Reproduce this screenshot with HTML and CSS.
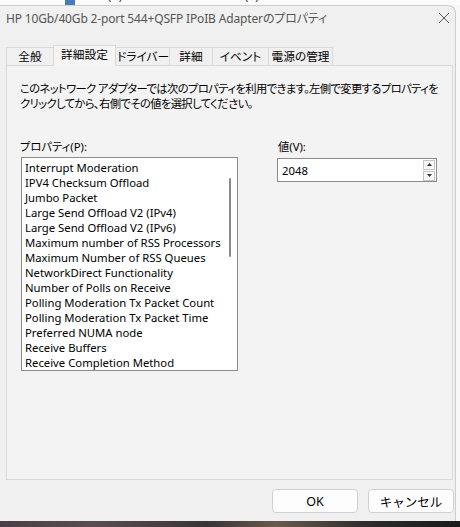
FILE: index.html
```html
<!DOCTYPE html>
<html lang="ja">
<head>
<meta charset="utf-8">
<title>プロパティ</title>
<link rel="stylesheet" href="styles.css">
</head>
<body>
<div class="desktop-top">
  <span class="app-icon"></span>
  <span class="app-text"><span class="app-text-inner">Intel(R) Ethernet Connection (4) I219-LM</span></span>
</div>
<div class="window">
  <div class="titlebar">
    <span class="title">HP 10Gb/40Gb 2-port 544+QSFP IPoIB Adapterのプロパティ</span>
    <svg class="close" width="12" height="12" viewBox="0 0 12 12"><path d="M1 1 L11 11 M11 1 L1 11" stroke="#5a5a5a" stroke-width="1" fill="none"/></svg>
  </div>
  <div class="tabs">
    <div class="tab t1">全般</div>
    <div class="tab t2 sel">詳細設定</div>
    <div class="tab t3">ドライバー</div>
    <div class="tab t4">詳細</div>
    <div class="tab t5">イベント</div>
    <div class="tab t6">電源の管理</div>
  </div>
  <div class="panel">
    <p class="desc">このネットワーク アダプターでは次のプロパティを利用できます。左側で変更するプロパティを<br>クリックしてから、右側でその値を選択してください。</p>
    <div class="fields">
      <div class="prop-col">
        <div class="label">プロパティ(P):</div>
        <div class="listbox">
          <div class="item">Interrupt Moderation</div>
          <div class="item">IPV4 Checksum Offload</div>
          <div class="item">Jumbo Packet</div>
          <div class="item">Large Send Offload V2 (IPv4)</div>
          <div class="item">Large Send Offload V2 (IPv6)</div>
          <div class="item">Maximum number of RSS Processors</div>
          <div class="item">Maximum Number of RSS Queues</div>
          <div class="item">NetworkDirect Functionality</div>
          <div class="item">Number of Polls on Receive</div>
          <div class="item">Polling Moderation Tx Packet Count</div>
          <div class="item">Polling Moderation Tx Packet Time</div>
          <div class="item">Preferred NUMA node</div>
          <div class="item">Receive Buffers</div>
          <div class="item">Receive Completion Method</div>
          <div class="scroll-thumb"></div>
        </div>
      </div>
      <div class="value-col">
        <div class="label">値(V):</div>
        <div class="spin">
          <span class="val">2048</span>
          <div class="spin-btns">
            <div class="spin-btn"><svg width="5" height="3" viewBox="0 0 5 3"><path d="M2.5 0 L5 3 L0 3 Z" fill="#333"/></svg></div>
            <div class="spin-btn"><svg width="5" height="3" viewBox="0 0 5 3"><path d="M0 0 L5 0 L2.5 3 Z" fill="#333"/></svg></div>
          </div>
        </div>
      </div>
    </div>
  </div>
  <div class="buttons">
    <button class="btn">OK</button>
    <button class="btn">キャンセル</button>
  </div>
</div>
<div class="desktop-bottom"></div>
</body>
</html>
```

FILE: styles.css
```css
html, body {
  margin: 0;
  padding: 0;
}
body {
  width: 460px;
  height: 527px;
  overflow: hidden;
  background: #f8f8f8;
  font-family: "Noto Sans", "Noto Sans CJK JP", sans-serif;
  font-size: 11.3px;
  color: #000;
  font-feature-settings: "palt";
}
.desktop-top {
  height: 5px;
  overflow: hidden;
  background: #fbfbfb;
  display: flex;
  align-items: flex-end;
  padding-left: 65px;
  gap: 7px;
}
.app-icon {
  display: block;
  width: 10px;
  height: 5px;
  background: #4a79b8;
  flex: none;
}
.app-text {
  display: block;
  height: 5px;
  overflow: hidden;
}
.app-text-inner {
  display: block;
  font-size: 12px;
  line-height: 16px;
  margin-top: -12px;
  color: #444;
  white-space: nowrap;
}
.window {
  width: 456px;
  height: 516px;
  box-sizing: border-box;
  background: #f0f0f0;
  border-top: 1px solid #cdcdcd;
  border-right: 1px solid #cdcdcd;
  border-top-right-radius: 8px;
  display: flex;
  flex-direction: column;
}
.titlebar {
  height: 24px;
  display: flex;
  align-items: center;
  justify-content: space-between;
  padding: 0 5px 0 6px;
}
.title {
  font-size: 12px;
  letter-spacing: -0.15px;
  color: #555;
  white-space: nowrap;
}
.close {
  display: block;
  flex: none;
}
.tabs {
  margin-top: 15px;
  height: 20px;
  display: flex;
  align-items: flex-end;
  padding-left: 6px;
  position: relative;
  z-index: 1;
}
.tab {
  box-sizing: border-box;
  height: 18px;
  line-height: 16px;
  font-size: 11.7px;
  text-align: center;
  border: 1px solid #d9d9d9;
  border-bottom: none;
  border-right: none;
  background: #f0f0f0;
  white-space: nowrap;
}
.tab.t6 { border-right: 1px solid #d9d9d9; }
.tab.sel {
  height: 21px;
  margin-bottom: -1px;
  background: #f5f5f5;
  border-right: 1px solid #d9d9d9;
  line-height: 17px;
}
.tab.sel + .tab { border-left-color: transparent; }
.t1 { width: 47px; }
.t2 { width: 63px; }
.t3 { width: 53px; }
.t4 { width: 43px; }
.t5 { width: 56px; }
.t6 { width: 65px; }
.panel {
  margin-left: 6px;
  width: 447px;
  height: 415px;
  box-sizing: border-box;
  border: 1px solid #dadada;
  background: #f3f3f3;
  padding: 15px 13px 0 13px;
}
.desc {
  margin: 0;
  line-height: 15px;
  letter-spacing: -0.6px;
  white-space: nowrap;
}
.fields {
  margin-top: 28px;
  display: flex;
}
.label {
  line-height: 15px;
  white-space: nowrap;
}
.prop-col {
  width: 218px;
  flex: none;
}
.listbox {
  margin-top: 3px;
  margin-left: 1px;
  width: 217px;
  height: 214px;
  box-sizing: border-box;
  border: 1px solid #8c8c8c;
  background: #fff;
  padding: 2px 3px;
  overflow: hidden;
  position: relative;
}
.item {
  line-height: 15px;
  white-space: nowrap;
}
.scroll-thumb {
  position: absolute;
  left: 207px;
  top: 20px;
  width: 2px;
  height: 79px;
  border-radius: 1px;
  background: #8b8b8b;
}
.value-col {
  margin-left: 39px;
}
.value-col .label {
  padding-left: 1px;
}
.spin {
  margin-top: 4px;
  width: 160px;
  height: 24px;
  box-sizing: border-box;
  border: 1px solid #8c8c8c;
  background: #fff;
  display: flex;
  align-items: center;
  justify-content: space-between;
  padding: 0 1px 0 4px;
}
.val {
  line-height: 15px;
}
.spin-btns {
  display: flex;
  flex-direction: column;
  gap: 1px;
}
.spin-btn {
  width: 12px;
  height: 10px;
  box-sizing: border-box;
  border: 1px solid #c4c4c4;
  background: #f7f7f7;
  display: flex;
  align-items: center;
  justify-content: center;
}
.spin-btn svg { display: block; }
.buttons {
  margin-top: 9px;
  display: flex;
  justify-content: flex-end;
  gap: 10px;
  padding-right: 1px;
}
.btn {
  width: 86px;
  height: 24px;
  box-sizing: border-box;
  border: 1px solid #d0d0d0;
  border-radius: 4px;
  background: #fdfdfd;
  font-family: inherit;
  font-size: 12.5px;
  color: #000;
  padding: 0;
}
.desktop-bottom {
  height: 6px;
  background: linear-gradient(90deg, #4a3f46 0%, #5b4c52 20%, #3b3338 45%, #6a5a4a 60%, #2e2a2e 80%, #1a1a1a 100%);
}
```
